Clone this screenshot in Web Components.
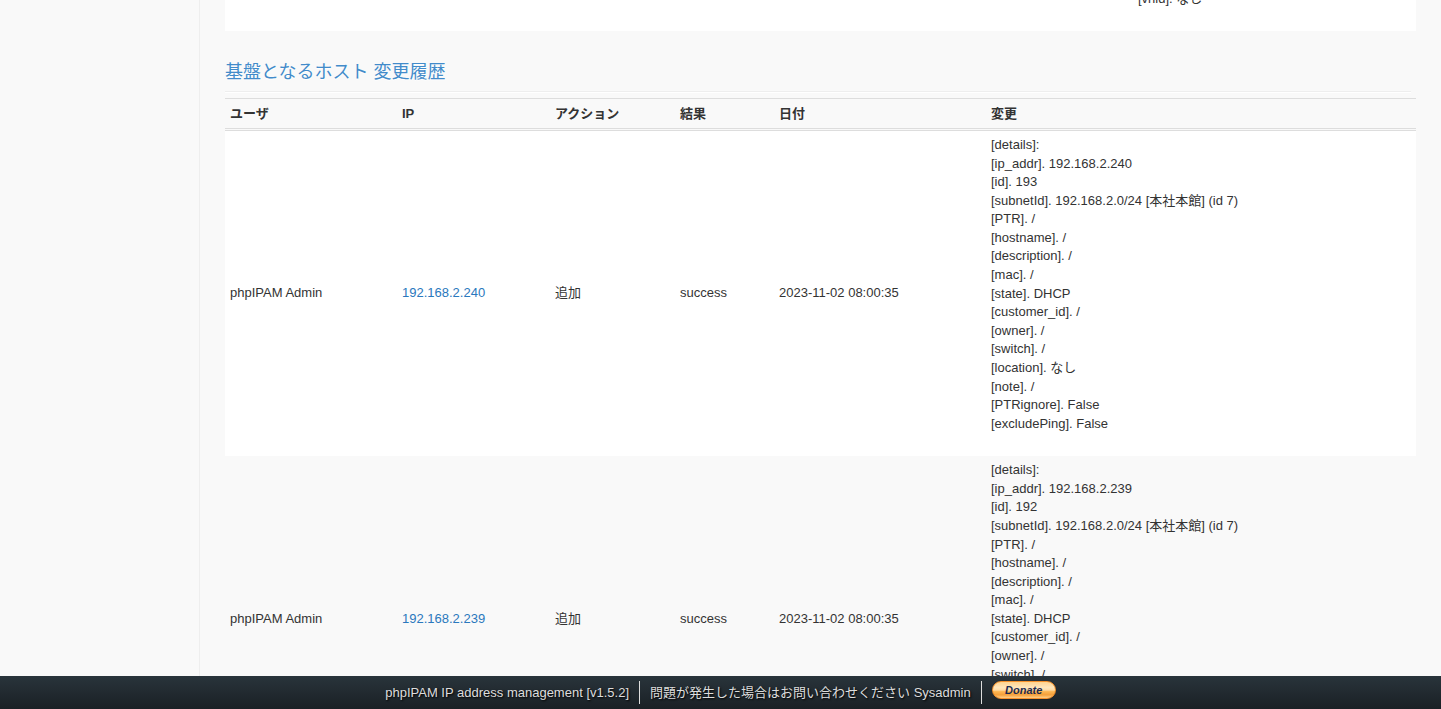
<!DOCTYPE html>
<html lang="ja">
<head>
<meta charset="utf-8">
<title>phpIPAM</title>
<style>
html, body { margin: 0; }
body {
  font: 13px/1.43 "Liberation Sans", "Noto Sans CJK JP", sans-serif;
  color: #333;
  background: #f9f9f9;
}
ipam-footer a { color: inherit; text-decoration: none; }
</style>
</head>
<body>
<ipam-page>
  <previous-log slot="main">
    <change-details>[vnid]. なし</change-details>
  </previous-log>
  <section-title slot="main">基盤となるホスト 変更履歴</section-title>
  <host-changelog slot="main"></host-changelog>
  <ipam-footer slot="footer">
    <span>phpIPAM IP address management [v1.5.2]</span>
    <span>問題が発生した場合はお問い合わせください <a href="mailto:admin@domain.local">Sysadmin</a></span>
    <donate-button></donate-button>
  </ipam-footer>
</ipam-page>

<script>
class ShadowElement extends HTMLElement {
  constructor() {
    super();
    this.attachShadow({ mode: 'open' }).innerHTML = this.render();
  }
}

customElements.define('ipam-page', class extends ShadowElement {
  render() {
    return `
      <style>
        :host { display: grid; grid-template: minmax(0, 1fr) auto / 200px minmax(0, 1fr); height: 100vh; }
        aside { border-right: 1px solid #eee; }
        main { overflow: hidden; padding: 0 25px; }
        footer { grid-column: 1 / -1; }
      </style>
      <aside></aside>
      <main><slot name="main"></slot></main>
      <footer><slot name="footer"></slot></footer>`;
  }
});

customElements.define('previous-log', class extends ShadowElement {
  render() {
    return `
      <style>
        :host { display: flex; align-items: flex-end; height: 31px; overflow: hidden; background: #fff; }
        div { flex: 1; display: grid; grid-template-columns: 913px 1fr; padding-bottom: 4px; }
        ::slotted(*) { grid-column: 2; }
      </style>
      <div><slot></slot></div>`;
  }
});

customElements.define('section-title', class extends ShadowElement {
  render() {
    return `
      <style>
        :host { display: block; padding: 31px 0 5px; }
        h4 { margin: 0; font-size: 18px; line-height: 20px; font-weight: 400; color: #428bca; text-shadow: 0 1px 0 #fff; }
        hr { margin: 9px 5px 0 0; border: 0; border-top: 1px solid #eee; border-bottom: 1px solid #fff; }
      </style>
      <h4><slot></slot></h4>
      <hr>`;
  }
});

customElements.define('change-details', class extends ShadowElement {
  render() {
    return `
      <style>
        :host { display: block; padding-bottom: 18px; }
        slot { white-space: pre-line; }
      </style>
      <slot></slot>`;
  }
});

const changes = [
  { ip: '192.168.2.240', id: 193 },
  { ip: '192.168.2.239', id: 192 }
];

const details = ({ ip, id }) => [
  '[details]:',
  `[ip_addr]. ${ip}`,
  `[id]. ${id}`,
  '[subnetId]. 192.168.2.0/24 [本社本館] (id 7)',
  '[PTR]. /',
  '[hostname]. /',
  '[description]. /',
  '[mac]. /',
  '[state]. DHCP',
  '[customer_id]. /',
  '[owner]. /',
  '[switch]. /',
  '[location]. なし',
  '[note]. /',
  '[PTRignore]. False',
  '[excludePing]. False'
].join('\n');

customElements.define('host-changelog', class extends ShadowElement {
  render() {
    const rows = changes.map(change => `
      <tr>
        <td>phpIPAM Admin</td>
        <td><a href="#${change.ip}">${change.ip}</a></td>
        <td>追加</td>
        <td>success</td>
        <td>2023-11-02 08:00:35</td>
        <td><change-details>${details(change)}</change-details></td>
      </tr>`).join('');
    return `
      <style>
        :host { display: block; }
        table { width: 100%; table-layout: fixed; border-spacing: 0; border-top: 1px solid #ddd; }
        .user { width: 172px; }
        .ip { width: 153px; }
        .action { width: 125px; }
        .result { width: 99px; }
        .date { width: 212px; }
        th, td { padding: 5px; text-align: left; vertical-align: middle; }
        th { line-height: 19px; border-bottom: 3px double #ddd; }
        tbody tr:nth-child(odd) { background: #fff; }
        a { color: #2a78bd; text-decoration: none; }
      </style>
      <table>
        <colgroup><col class="user"><col class="ip"><col class="action"><col class="result"><col class="date"><col></colgroup>
        <thead>
          <tr><th>ユーザ</th><th>IP</th><th>アクション</th><th>結果</th><th>日付</th><th>変更</th></tr>
        </thead>
        <tbody>${rows}</tbody>
      </table>`;
  }
});

customElements.define('ipam-footer', class extends ShadowElement {
  render() {
    return `
      <style>
        :host {
          display: flex; justify-content: center; height: 28px; padding-top: 5px;
          background: linear-gradient(#29343b, #1a2025);
          color: #ddd; text-shadow: 1px 1px 2px #000;
        }
        ::slotted(*) { height: 23px; line-height: 23px; padding: 0 10px; }
        ::slotted(span) { border-right: 1px solid #ddd; }
        ::slotted(donate-button) { padding-right: 0; }
        ::slotted(span:first-child) { padding-left: 0; }
      </style>
      <slot></slot>`;
  }
});

customElements.define('donate-button', class extends ShadowElement {
  render() {
    return `
      <style>
        :host { display: block; }
        button {
          display: block; width: 64px; height: 18px; padding: 0; border: 1px solid #f7912a; border-radius: 9px;
          background: linear-gradient(#ffd490, #ffe6bc 35%, #ffdca6 50%, #fdb653 60%, #f5a03a 80%, #ffd08a);
          color: #1c2a50; font: italic bold 11px/16px "Liberation Sans", sans-serif; cursor: pointer;
        }
      </style>
      <button type="button">Donate</button>`;
  }
});
</script>
</body>
</html>
